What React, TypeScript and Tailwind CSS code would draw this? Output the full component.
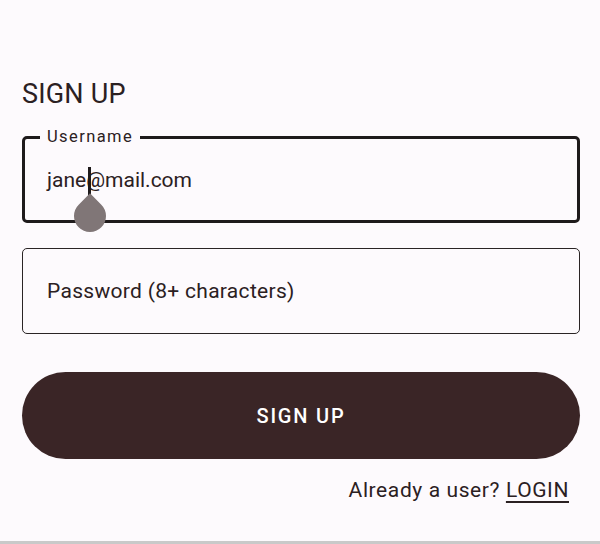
import React from "react";

const App = () => {
  return (
    <div
      className="w-[600px] h-[544px] bg-[#fdfafd] flex flex-col border-b-[3px] border-[#c9c9c9] text-[#2b2022]"
      style={{ fontFamily: "Roboto, 'Noto Sans', sans-serif" }}
    >
      <div className="flex flex-col pl-[22px] pr-[20px] pt-[78px]">
        <h1 className="text-[27px] leading-[32px] tracking-[0.2px]">SIGN UP</h1>

        {/* focused username field */}
        <div className="relative mt-[26px] h-[87px] border-[3px] border-[#1e1a1b] rounded-[5px] flex items-center pl-[22px]">
          <span className="absolute left-[15px] top-[-12px] px-[7px] bg-[#fdfafd] text-[16.5px] leading-[20px] tracking-[1.4px]">
            Username
          </span>
          <span className="relative text-[21px] leading-[28px]">
            jane@mail.com
            <span className="absolute left-[41px] top-[1px] w-[2.5px] h-[29px] bg-[#1e1a1b]" />
          </span>
          <div className="absolute left-[49px] top-[61px] w-[32px] h-[32px] bg-[#807677] rounded-full rounded-tl-none rotate-45" />
        </div>

        <div className="mt-[25px] h-[86px] border-[1.5px] border-[#2a2425] rounded-[5px] flex items-center pl-[24px] text-[21px] leading-[28px] tracking-[0.3px]">
          Password (8+ characters)
        </div>

        <button className="mt-[38px] h-[87px] rounded-full bg-[#3a2526] text-white text-[20px] tracking-[1.8px] font-medium flex items-center justify-center">
          SIGN UP
        </button>

        <div className="mt-[17px] pr-[11px] flex justify-end text-[21px] leading-[28px] tracking-[0.6px]">
          <span>
            Already a user?{" "}
            <span className="underline decoration-[1.5px] underline-offset-[4px]">LOGIN</span>
          </span>
        </div>
      </div>
    </div>
  );
};

export default App;
